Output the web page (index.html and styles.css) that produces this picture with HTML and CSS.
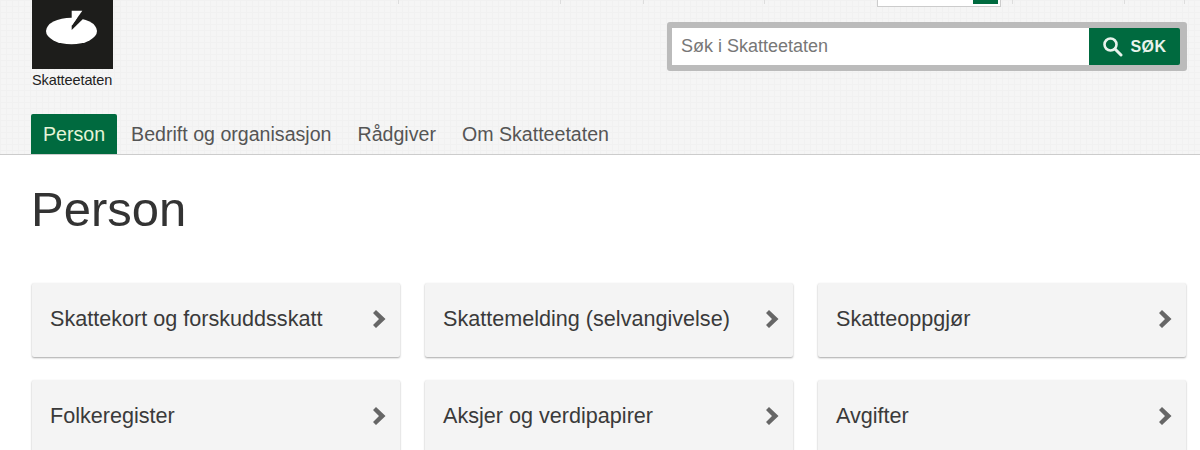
FILE: index.html
```html
<!DOCTYPE html>
<html lang="no">
<head>
	<meta charset="UTF-8">
	<meta name="viewport" content="width=device-width">
	<title>Person - Skatteetaten</title>
	<link rel="stylesheet" href="styles.css">
</head>

<body>
	<header class="site-header">
		<div class="top-strip">
			<span class="top-sep sep-1"></span>
			<span class="top-sep sep-2"></span>
			<span class="top-sep sep-3"></span>
			<span class="top-sep sep-4"></span>
			<div class="lang-box"><span class="lang-btn"></span></div>
			<span class="top-sep sep-5"></span>
			<span class="top-sep sep-6"></span>
			<span class="top-sep sep-7"></span>
		</div>
		<div class="header-row">
			<a class="logo" href="#">
				<span class="logo-mark">
					<svg width="81" height="69" viewBox="0 0 81 69">
						<ellipse cx="39.5" cy="31" rx="25.5" ry="13.3" fill="#fff"/>
						<path d="M39.7 30 L39.7 25.7 L47 15 L53 17 Z" fill="#1d1d1b"/>
						<path d="M39.7 10.7 L50.3 10.7 L39.7 25.7 Z" fill="#fff"/>
					</svg>
				</span>
				<span class="logo-text">Skatteetaten</span>
			</a>
			<form class="search">
				<input class="search-input" type="text" placeholder="Søk i Skatteetaten">
				<button class="search-btn" type="button">
					<svg width="21" height="21" viewBox="0 0 21 21">
						<circle cx="8.5" cy="8.5" r="6" fill="none" stroke="#e8f3ec" stroke-width="2.6"/>
						<path d="M13 13 L19 19" stroke="#e8f3ec" stroke-width="3" stroke-linecap="round"/>
					</svg>
					SØK
				</button>
			</form>
		</div>
		<nav class="main-nav">
			<a class="nav-item active" href="#">Person</a>
			<a class="nav-item" href="#">Bedrift og organisasjon</a>
			<a class="nav-item" href="#">Rådgiver</a>
			<a class="nav-item" href="#">Om Skatteetaten</a>
		</nav>
	</header>
	<main class="content">
		<h1>Person</h1>
		<div class="cards">
			<a class="card" href="#">Skattekort og forskuddsskatt<svg class="chev" width="13" height="18" viewBox="0 0 13 18"><path d="M0 3 L3 0 L12.5 9 L3 18 L0 15 L6 9 Z" fill="#666"/></svg></a>
			<a class="card" href="#">Skattemelding (selvangivelse)<svg class="chev" width="13" height="18" viewBox="0 0 13 18"><path d="M0 3 L3 0 L12.5 9 L3 18 L0 15 L6 9 Z" fill="#666"/></svg></a>
			<a class="card" href="#">Skatteoppgjør<svg class="chev" width="13" height="18" viewBox="0 0 13 18"><path d="M0 3 L3 0 L12.5 9 L3 18 L0 15 L6 9 Z" fill="#666"/></svg></a>
			<a class="card" href="#">Folkeregister<svg class="chev" width="13" height="18" viewBox="0 0 13 18"><path d="M0 3 L3 0 L12.5 9 L3 18 L0 15 L6 9 Z" fill="#666"/></svg></a>
			<a class="card" href="#">Aksjer og verdipapirer<svg class="chev" width="13" height="18" viewBox="0 0 13 18"><path d="M0 3 L3 0 L12.5 9 L3 18 L0 15 L6 9 Z" fill="#666"/></svg></a>
			<a class="card" href="#">Avgifter<svg class="chev" width="13" height="18" viewBox="0 0 13 18"><path d="M0 3 L3 0 L12.5 9 L3 18 L0 15 L6 9 Z" fill="#666"/></svg></a>
		</div>
	</main>
</body>
</html>
```

FILE: styles.css
```css
body {
	margin: 0;
	height: 450px;
	overflow: hidden;
	background: #fff;
	font-family: "Liberation Sans", Arial, sans-serif;
	color: #333;
}

a {
	text-decoration: none;
	color: inherit;
}

.site-header {
	height: 154px;
	border-bottom: 1px solid #ccc;
	background-color: #f5f5f5;
	background-image:
		linear-gradient(#f1f1f1 1px, transparent 1px),
		linear-gradient(90deg, #f1f1f1 1px, transparent 1px);
	background-size: 6px 6px;
	position: relative;
}

/* cut off links at the very top of the page */
.top-strip {
	position: absolute;
	top: 0;
	left: 0;
	right: 0;
	height: 7px;
}

.top-sep {
	position: absolute;
	top: 0;
	width: 1px;
	height: 4px;
	background: #ddd;
}

.sep-1 { left: 398px; }
.sep-2 { left: 560px; }
.sep-3 { left: 643px; }
.sep-4 { left: 764px; }
.sep-5 { left: 1012px; }
.sep-6 { left: 1124px; }
.sep-7 { left: 1184px; }

.lang-box {
	position: absolute;
	left: 877px;
	top: 0;
	width: 122px;
	height: 6px;
	background: #fff;
	border: 1px solid #ccc;
	border-top: none;
}

.lang-btn {
	position: absolute;
	right: 2px;
	top: 0;
	width: 25px;
	height: 4px;
	background: #006a3f;
}

.header-row {
	display: flex;
	justify-content: space-between;
	align-items: flex-start;
	padding: 0 13px 0 32px;
	height: 114px;
}

.logo {
	display: block;
	width: 81px;
}

.logo-mark {
	display: block;
	width: 81px;
	height: 69px;
	background: #1d1d1b;
}

.logo-mark svg {
	display: block;
}

.logo-text {
	display: block;
	margin-top: 3px;
	font-size: 14.5px;
	letter-spacing: -0.1px;
	white-space: nowrap;
	color: #222;
}

.search {
	display: flex;
	width: 508px;
	height: 37px;
	margin-top: 22px;
	padding: 6px 7px 6px 5px;
	background: #bbb;
	border-radius: 3px;
}

.search-input {
	flex: 1;
	min-width: 0;
	border: none;
	padding: 0 9px;
	font-family: inherit;
	font-size: 18px;
	background: #fff;
}

.search-input::placeholder {
	color: #777;
	opacity: 1;
}

.search-btn {
	display: flex;
	align-items: center;
	justify-content: center;
	gap: 7px;
	width: 91px;
	border: none;
	border-radius: 0 2px 2px 0;
	background: #006a3f;
	color: #e8f3ec;
	font-family: inherit;
	font-size: 16px;
	font-weight: bold;
	letter-spacing: 0.5px;
}

.main-nav {
	display: flex;
	padding-left: 31px;
	height: 40px;
}

.nav-item {
	padding: 0 13px;
	line-height: 40px;
	font-size: 19.6px;
	color: #555;
}

.nav-item.active {
	padding: 0 12px;
	margin-right: 1px;
	background: #006a3f;
	color: #e6f5d8;
	border-radius: 2px 2px 0 0;
}

.content {
	padding: 0 14px 0 32px;
}

h1 {
	margin: 0 0 0 -1px;
	padding-top: 26px;
	font-size: 49px;
	font-weight: normal;
	line-height: 56px;
	color: #333;
}

.cards {
	display: grid;
	grid-template-columns: repeat(3, 368px);
	column-gap: 25px;
	row-gap: 23px;
	margin-top: 46px;
}

.card {
	display: flex;
	align-items: center;
	justify-content: space-between;
	height: 72px;
	padding: 0 14px 2px 18px;
	background: #f4f4f4;
	border-radius: 2px;
	box-shadow: 0 1px 2px rgba(0, 0, 0, 0.35);
	font-size: 21.6px;
	color: #3a3a3a;
}
```
